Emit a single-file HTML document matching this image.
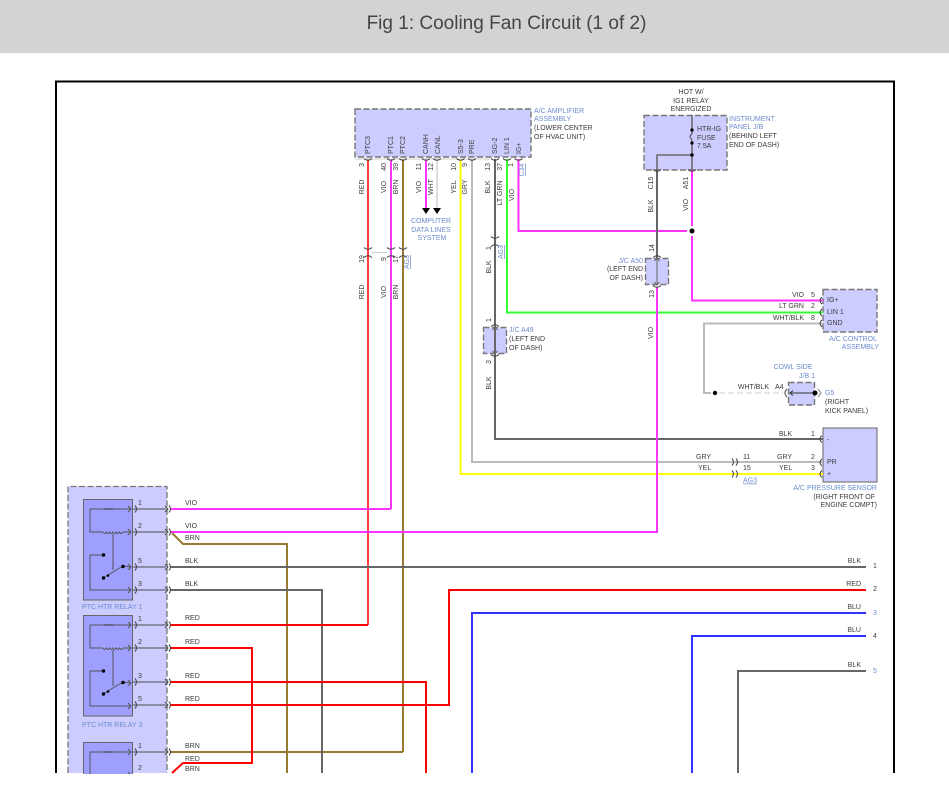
<!DOCTYPE html>
<html><head><meta charset="utf-8"><style>
html,body{margin:0;padding:0;background:#fff;width:949px;height:807px;overflow:hidden}
#h{position:absolute;left:0;top:0;width:949px;height:53px;background:#d3d3d3;color:#454545;font:19px "Liberation Sans",sans-serif;text-align:center;line-height:48px;padding-left:64px;box-sizing:border-box}
svg{position:absolute;left:0;top:0;filter:blur(.25px)}
text{font:7px "Liberation Sans",sans-serif;fill:#3c3c3c}
.b{fill:#6b8ccf}
.w{fill:none;stroke-width:2}
.r{fill:none;stroke:#555;stroke-width:1}
.c{fill:none;stroke:#444;stroke-width:1}
.box{fill:#ccccff;stroke:#777;stroke-width:1.4;stroke-dasharray:6 2.5}
.s{fill:#ccccff;stroke:#666;stroke-width:1}
</style></head><body>
<div id="h">Fig 1: Cooling Fan Circuit (1 of 2)</div>
<svg width="949" height="807" viewBox="0 0 949 807">
<defs>
<g id="relay">
<rect x="83.5" y="499.5" width="49" height="100.5" fill="#9f9fff" stroke="#666" stroke-width="1"/>
<path class="r" d="M130 509H90V532H103M123 532H131M113 534V570M103 555H90V590H131M103 578L123 566L131 567"/>
<path class="r" d="M103 532q1.700 3 3.300 0q1.700 3 3.300 0q1.700 3 3.300 0q1.700 3 3.300 0q1.700 3 3.300 0q1.700 3 3.300 0"/>
<path d="M104 509h9" stroke="#444" stroke-width="1.200"/>
<path class="r" d="M128 506l3 3l-3 3M128 529l3 3l-3 3M128 564l3 3l-3 3M128 587l3 3l-3 3"/>
<circle cx="103.500" cy="555" r="1.700"/><circle cx="103.500" cy="578" r="1.700"/><circle cx="108" cy="575.500" r="1.300"/><circle cx="123" cy="566.500" r="1.700"/>
</g>
<path id="pc" class="c" d="M-2-3.500q3 3.500 0 7"/>
<path id="pd" class="c" d="M-4-3l3 3l-3 3M0-3.500q3 3.500 0 7"/>
<path id="v" class="c" d="M-4 1.500q4-3.500 8 0"/>
<path id="u" class="c" d="M-4-1.500q4 3.500 8 0"/>
</defs>

<!-- frame -->
<rect x="56" y="81.500" width="838" height="692" fill="#fff"/>
<path d="M56 773V81.500H894V773" fill="none" stroke="#000" stroke-width="2"/>

<!-- boxes -->
<rect class="box" x="355" y="109" width="176" height="48"/>
<rect class="box" x="644" y="115.500" width="83" height="54.500"/>
<rect class="box" x="645.500" y="258.500" width="23" height="26"/>
<rect class="box" x="483.500" y="327.500" width="23" height="26"/>
<rect class="box" x="823" y="289.500" width="54" height="42.500"/>
<rect class="s" x="823" y="428" width="54" height="54"/>
<rect class="box" x="788.500" y="382.500" width="26" height="22.500"/>
<path d="M68 773V486.500H167V773Z" fill="#ccccff"/>
<path d="M68 773V486.500H167V773" fill="none" stroke="#777" stroke-width="1.300" stroke-dasharray="6 2.500"/>

<!-- wires -->
<g class="w">
<path stroke="#ff3b3b" d="M368 159V625"/>
<path stroke="#ff33ff" d="M391 159V509M426 159V209"/>
<path stroke="#997a33" d="M403 159V752"/>
<path stroke="#dddddd" d="M437 159V209"/>
<path stroke="#ffff00" d="M460.500 159V474H823"/>
<path stroke="#bbbbbb" d="M472 159V462H823"/>
<path stroke="#666" d="M495 159V439H823"/>
<path stroke="#33ff33" d="M507 159V312.500H823"/>
<path stroke="#ff33ff" d="M518.500 159V231H687M692 170V226M692 236V300.500H823"/>
<path stroke="#ff33ff" d="M657 287V532H170"/>
<path stroke="#ff33ff" d="M170 509H391"/>
<path stroke="#bbbbbb" d="M823 323.500H704V393H711"/>
<path stroke="#dddddd" stroke-dasharray="6 3" d="M719 393H783" stroke-width="1.500"/>
<path stroke="#997a33" d="M172 533L183 544H287V773M170 752H403"/>
<path stroke="#666" d="M170 567H866M170 590H322V773"/>
<path stroke="#ff0000" d="M170 625H368M170 648H252V763H183L172 773M170 682H426V773M170 705H449V590H866"/>
<path stroke="#3333ff" d="M866 613H472V773M866 636H692V773"/>
<path stroke="#666" d="M866 671H738V773"/>
</g>
<path stroke="#555" stroke-width="1.300" fill="none" d="M692 115V134M692 143V170M692 155H657V170"/>
<path stroke="#555" stroke-width="1.100" fill="none" d="M692 134q-3 2 -1.500 4q2 2 1.500 5"/>
<path stroke="#666" stroke-width="1" fill="none" d="M657 258V285M654.500 261l2.500-3l2.500 3M654.500 282l2.500 3l2.500-3M495 327V354M492.500 330l2.500-3l2.500 3M492.500 351l2.500 3l2.500-3"/>
<path stroke="#333" stroke-width="1" fill="none" d="M790 393H815M793 390.500l-3 2.500l3 2.500"/>
<path stroke="#666" stroke-width="2" fill="none" d="M657 170V258M495 354V439"/>

<!-- pin links lines -->
<path stroke="#cccccc" stroke-width="1" d="M355 159H490M372 252.500H387"/>

<!-- arrows -->
<path d="M422 208h8l-4 6zM433 208h8l-4 6z" fill="#000"/>

<!-- dots -->
<circle cx="692" cy="231" r="2.500"/>
<circle cx="692" cy="130" r="1.600"/><circle cx="692" cy="143" r="1.600"/><circle cx="692" cy="155" r="1.700"/>
<circle cx="715" cy="393" r="2.200"/>
<circle cx="815" cy="393" r="2.500"/>
<path d="M818 389l3 4l-3 4" fill="none" stroke="#aaa" stroke-width="1.500"/>

<!-- connectors top -->
<g>
<use href="#u" x="368" y="160"/><use href="#u" x="391" y="160"/><use href="#u" x="403" y="160"/><use href="#u" x="426" y="160"/><use href="#u" x="437" y="160"/><use href="#u" x="460.500" y="160"/><use href="#u" x="472" y="160"/><use href="#u" x="495" y="160"/><use href="#u" x="507" y="160"/><use href="#u" x="518.500" y="160"/>
<use href="#u" x="368" y="249"/><use href="#u" x="391" y="249"/><use href="#u" x="403" y="249"/><use href="#v" x="368" y="256"/><use href="#v" x="391" y="256"/><use href="#v" x="403" y="256"/>
<use href="#u" x="495" y="238"/><use href="#v" x="495" y="245"/>
<use href="#u" x="657" y="171"/><use href="#u" x="692" y="171"/>
<use href="#v" x="657" y="256"/><use href="#u" x="657" y="287"/>
<use href="#v" x="495" y="325"/><use href="#u" x="495" y="356"/>
</g>

<!-- relays -->
<use href="#relay"/>
<use href="#relay" y="116"/>
<g transform="translate(0,243)"><use href="#relay"/></g>
<rect x="56" y="774" width="840" height="33" fill="#fff"/>
<path d="M133 509H166M133 532H166M133 567H166M133 590H166M133 625H166M133 648H166M133 682H166M133 705H166M133 752H166" stroke="#778" stroke-width="1.400"/>
<g>
<use href="#pc" x="137" y="509"/><use href="#pc" x="137" y="532"/><use href="#pc" x="137" y="567"/><use href="#pc" x="137" y="590"/><use href="#pc" x="137" y="625"/><use href="#pc" x="137" y="648"/><use href="#pc" x="137" y="682"/><use href="#pc" x="137" y="705"/><use href="#pc" x="137" y="752"/>
<use href="#pd" x="169" y="509"/><use href="#pd" x="169" y="532"/><use href="#pd" x="169" y="567"/><use href="#pd" x="169" y="590"/><use href="#pd" x="169" y="625"/><use href="#pd" x="169" y="648"/><use href="#pd" x="169" y="682"/><use href="#pd" x="169" y="705"/><use href="#pd" x="169" y="752"/>
</g>
<!-- right side connectors -->
<path class="c" d="M822 297q-4 3.500 0 7M822 309q-4 3.500 0 7M822 320q-4 3.500 0 7M822 435.500q-4 3.500 0 7M822 459q-4 3.500 0 7M822 470.500q-4 3.500 0 7M787 389q-4 4 0 8"/>
<path class="c" d="M732 458.500q3 3.500 0 7M736 458.500q3 3.500 0 7M732 470.500q3 3.500 0 7M736 470.500q3 3.500 0 7"/>

<!-- horizontal text -->
<text class="b" x="534" y="113">A/C AMPLIFIER</text>
<text class="b" x="534" y="121">ASSEMBLY</text>
<text x="534" y="130">(LOWER CENTER</text>
<text x="534" y="139">OF HVAC UNIT)</text>
<text class="b" text-anchor="middle" x="431" y="223">COMPUTER</text>
<text class="b" text-anchor="middle" x="431" y="232">DATA LINES</text>
<text class="b" text-anchor="middle" x="432" y="240">SYSTEM</text>
<text text-anchor="middle" x="691" y="94">HOT W/</text>
<text text-anchor="middle" x="691" y="103">IG1 RELAY</text>
<text text-anchor="middle" x="691" y="111">ENERGIZED</text>
<text x="697" y="131">HTR-IG</text><text x="697" y="140">FUSE</text><text x="697" y="148">7.5A</text>
<text class="b" x="729" y="121">INSTRUMENT</text>
<text class="b" x="729" y="129">PANEL J/B</text>
<text x="729" y="138">(BEHIND LEFT</text>
<text x="729" y="147">END OF DASH)</text>
<text class="b" text-anchor="end" x="643" y="263">J/C A50</text>
<text text-anchor="end" x="643" y="271">(LEFT END</text>
<text text-anchor="end" x="643" y="280">OF DASH)</text>
<text class="b" x="509" y="332">J/C A49</text>
<text x="509" y="341">(LEFT END</text>
<text x="509" y="350">OF DASH)</text>
<text text-anchor="end" x="804" y="297">VIO</text><text x="811" y="297">5</text>
<text text-anchor="end" x="804" y="308">LT GRN</text><text x="811" y="308">2</text>
<text text-anchor="end" x="804" y="320">WHT/BLK</text><text x="811" y="320">8</text>
<text x="827" y="302">IG+</text><text x="827" y="314">LIN 1</text><text x="827" y="325">GND</text>
<text class="b" text-anchor="end" x="877" y="341">A/C CONTROL</text>
<text class="b" text-anchor="end" x="879" y="349">ASSEMBLY</text>
<text class="b" text-anchor="middle" x="793" y="369">COWL SIDE</text>
<text class="b" text-anchor="middle" x="807" y="378">J/B 1</text>
<text text-anchor="end" x="769" y="389">WHT/BLK</text><text x="775" y="389">A4</text>
<text class="b" x="825" y="395">G5</text>
<text x="825" y="404">(RIGHT</text>
<text x="825" y="413">KICK PANEL)</text>
<text x="779" y="436">BLK</text><text x="811" y="436">1</text>
<text x="827" y="442">-</text><text x="827" y="464">PR</text><text x="827" y="476">+</text>
<text x="696" y="459">GRY</text><text x="698" y="470">YEL</text>
<text x="743" y="459">11</text><text x="743" y="470">15</text>
<text x="777" y="459">GRY</text><text x="779" y="470">YEL</text>
<text x="811" y="459">2</text><text x="811" y="470">3</text>
<text class="b" x="743" y="482.500" text-decoration="underline">AG3</text>
<text class="b" text-anchor="end" x="877" y="490">A/C PRESSURE SENSOR</text>
<text text-anchor="end" x="875" y="499">(RIGHT FRONT OF</text>
<text text-anchor="end" x="877" y="507">ENGINE COMPT)</text>

<text x="185" y="505">VIO</text><text x="185" y="528">VIO</text><text x="185" y="540">BRN</text>
<text x="185" y="563">BLK</text><text x="185" y="586">BLK</text>
<text x="185" y="620">RED</text><text x="185" y="644">RED</text><text x="185" y="678">RED</text><text x="185" y="701">RED</text>
<text x="185" y="748">BRN</text><text x="185" y="761">RED</text><text x="185" y="771">BRN</text>
<g fill="#8a3a4a">
<text x="138" y="505">1</text><text x="138" y="528">2</text><text x="138" y="563">5</text><text x="138" y="586">3</text>
<text x="138" y="621">1</text><text x="138" y="644">2</text><text x="138" y="678">3</text><text x="138" y="701">5</text>
<text x="138" y="748">1</text><text x="138" y="770">2</text>
</g>
<text class="b" x="82" y="609">PTC HTR RELAY 1</text>
<text class="b" x="82" y="727">PTC HTR RELAY 3</text>

<text text-anchor="end" x="861" y="563">BLK</text><text text-anchor="end" x="861" y="586">RED</text><text text-anchor="end" x="861" y="609">BLU</text><text text-anchor="end" x="861" y="632">BLU</text><text text-anchor="end" x="861" y="667">BLK</text>
<text x="873" y="568">1</text><text x="873" y="591">2</text><text class="b" x="873" y="615">3</text><text x="873" y="638">4</text><text class="b" x="873" y="673">5</text>

<!-- amp rotated labels -->
<text transform="rotate(-90 370 154)" x="370" y="154">PTC3</text>
<text transform="rotate(-90 393 154)" x="393" y="154">PTC1</text>
<text transform="rotate(-90 405 154)" x="405" y="154">PTC2</text>
<text transform="rotate(-90 428 154)" x="428" y="154">CANH</text>
<text transform="rotate(-90 440 154)" x="440" y="154">CANL</text>
<text transform="rotate(-90 463 154)" x="463" y="154">S5-3</text>
<text transform="rotate(-90 474 154)" x="474" y="154">PRE</text>
<text transform="rotate(-90 497 154)" x="497" y="154">SG-2</text>
<text transform="rotate(-90 509 154)" x="509" y="154">LIN 1</text>
<text transform="rotate(-90 521 154)" x="521" y="154">IG+</text>
<g text-anchor="end">
<text transform="rotate(-90 364 163)" x="364" y="163">3</text>
<text transform="rotate(-90 386 163)" x="386" y="163">40</text>
<text transform="rotate(-90 398 163)" x="398" y="163">39</text>
<text transform="rotate(-90 421 163)" x="421" y="163">11</text>
<text transform="rotate(-90 433 163)" x="433" y="163">12</text>
<text transform="rotate(-90 456 163)" x="456" y="163">10</text>
<text transform="rotate(-90 467 163)" x="467" y="163">9</text>
<text transform="rotate(-90 490 163)" x="490" y="163">13</text>
<text transform="rotate(-90 502 163)" x="502" y="163">37</text>
<text transform="rotate(-90 513 163)" x="513" y="163">1</text>
</g>
<g text-anchor="middle">
<text transform="rotate(-90 364 187)" x="364" y="187">RED</text>
<text transform="rotate(-90 386 187)" x="386" y="187">VIO</text>
<text transform="rotate(-90 398 187)" x="398" y="187">BRN</text>
<text transform="rotate(-90 421 187)" x="421" y="187">VIO</text>
<text transform="rotate(-90 433 187)" x="433" y="187">WHT</text>
<text transform="rotate(-90 456 187)" x="456" y="187">YEL</text>
<text transform="rotate(-90 467 187)" x="467" y="187">GRY</text>
<text transform="rotate(-90 490 187)" x="490" y="187">BLK</text>
<text transform="rotate(-90 502 193)" x="502" y="193">LT GRN</text>
<text transform="rotate(-90 514 195)" x="514" y="195">VIO</text>
<text class="b" transform="rotate(-90 524 170)" x="524" y="170" text-decoration="underline">C34</text>
<text transform="rotate(-90 364 259)" x="364" y="259">19</text>
<text transform="rotate(-90 386 259)" x="386" y="259">9</text>
<text transform="rotate(-90 398 259)" x="398" y="259">17</text>
<text class="b" transform="rotate(-90 409 262)" x="409" y="262" text-decoration="underline">AG3</text>
<text transform="rotate(-90 364 292)" x="364" y="292">RED</text>
<text transform="rotate(-90 386 292)" x="386" y="292">VIO</text>
<text transform="rotate(-90 398 292)" x="398" y="292">BRN</text>
<text transform="rotate(-90 491 248)" x="491" y="248">1</text>
<text class="b" transform="rotate(-90 503 252)" x="503" y="252" text-decoration="underline">AG3</text>
<text transform="rotate(-90 491 267)" x="491" y="267">BLK</text>
<text transform="rotate(-90 491 320)" x="491" y="320">1</text>
<text transform="rotate(-90 491 362)" x="491" y="362">3</text>
<text transform="rotate(-90 491 383)" x="491" y="383">BLK</text>
<text transform="rotate(-90 653 333)" x="653" y="333">VIO</text>
<text transform="rotate(-90 654 248)" x="654" y="248">14</text>
<text transform="rotate(-90 654 294)" x="654" y="294">13</text>
<text transform="rotate(-90 653 183)" x="653" y="183">C15</text>
<text transform="rotate(-90 653 206)" x="653" y="206">BLK</text>
<text transform="rotate(-90 688 183)" x="688" y="183">A51</text>
<text transform="rotate(-90 688 205)" x="688" y="205">VIO</text>
</g>
</svg>
</body></html>
